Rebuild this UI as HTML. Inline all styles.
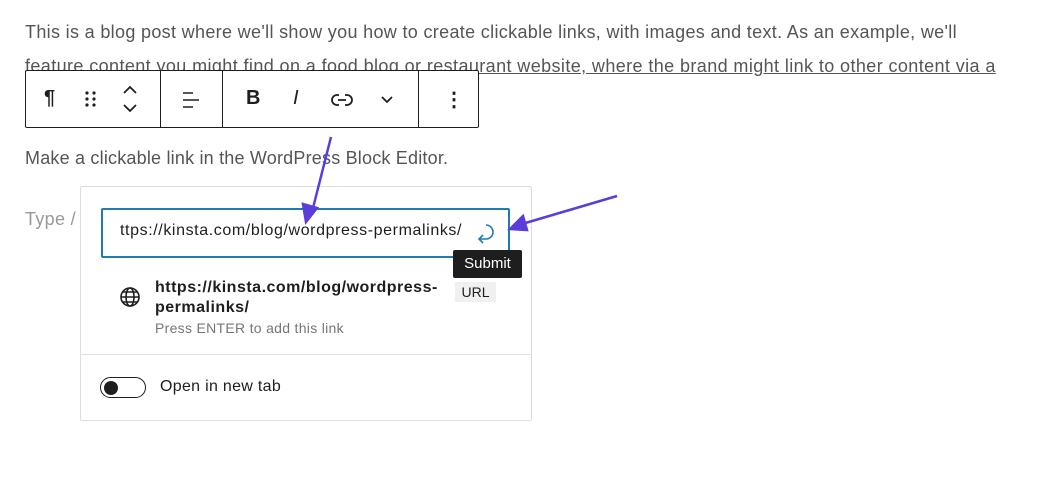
<!DOCTYPE html>
<html><head><style>
body{margin:0;width:1046px;height:485px;background:#fff;position:relative;overflow:hidden;font-family:"Liberation Sans",sans-serif}
.t{position:absolute;font-size:18px;color:#555;white-space:nowrap;letter-spacing:0.33px}
.tb{position:absolute;left:25px;top:70px;width:452px;height:56px;border:1px solid #1e1e1e;background:#fff;border-radius:2px}
.sep{position:absolute;top:0;height:56px;border-left:1px solid #1e1e1e}
.ic{position:absolute;top:16px;font-size:20px;color:#1e1e1e}
.pop{position:absolute;left:80px;top:186px;width:450px;height:233px;border:1px solid #ddd;background:#fff;border-radius:2px}
</style></head><body>
<div class="t" style="left:25px;top:22px">This is a blog post where we'll show you how to create clickable links, with images and text. As an example, we'll</div>
<div class="t" style="left:25px;top:56px;text-decoration:underline;letter-spacing:0.4px">feature content you might find on a food blog or restaurant website, where the brand might link to other content via a</div>
<div class="tb">
 <div class="ic" style="left:18px;font-weight:bold">¶</div>
 <svg style="position:absolute;left:58px;top:18px" width="14" height="20" fill="#1e1e1e"><circle cx="3" cy="4" r="1.6"/><circle cx="10" cy="4" r="1.6"/><circle cx="3" cy="10" r="1.6"/><circle cx="10" cy="10" r="1.6"/><circle cx="3" cy="16" r="1.6"/><circle cx="10" cy="16" r="1.6"/></svg>
 <svg style="position:absolute;left:95px;top:12px" width="18" height="32" fill="none" stroke="#1e1e1e" stroke-width="1.8"><path d="M3 10l6-6 6 6M3 22l6 6 6-6"/></svg>
 <div class="sep" style="left:134px"></div>
 <svg style="position:absolute;left:153px;top:17px" width="24" height="24"><path d="M4 5h10M4 12h16M4 19h10" stroke="#1e1e1e" stroke-width="1.6"/></svg>
 <div class="sep" style="left:196px"></div>
 <div class="ic" style="left:220px;font-weight:bold">B</div>
 <div class="ic" style="left:267px;font-style:italic">I</div>
 <svg style="position:absolute;left:305px;top:19px" width="22" height="20"><path d="M8 5H6a5 5 0 000 10h2M14 5h2a5 5 0 010 10h-2M7 10h8" stroke="#1e1e1e" stroke-width="1.8" fill="none"/></svg>
 <svg style="position:absolute;left:354px;top:22px" width="14" height="12"><path d="M2 4l5 5 5-5" stroke="#1e1e1e" stroke-width="1.8" fill="none"/></svg>
 <div class="sep" style="left:392px"></div>
 <div class="ic" style="left:418px;font-weight:bold">⋮</div>
</div>
<div class="t" style="left:25px;top:148px;letter-spacing:0.2px">Make a clickable link in the WordPress Block Editor.</div>
<div class="t" style="left:25px;top:209px;color:#999">Type /</div>
<div class="pop"></div>
<div style="position:absolute;left:101px;top:208px;width:405px;height:46px;border:2px solid #1f7bb0;border-radius:2px;background:#fff"></div>
<div style="position:absolute;left:120px;top:222px;font-size:16px;color:#1e1e1e;letter-spacing:0.6px">ttps://kinsta.com/blog/wordpress-permalinks/</div>
<svg style="position:absolute;left:474px;top:222px" width="26" height="26"><path d="M12 3a7 7 0 110 14H5M9 13l-4 4 4 4" stroke="#1f7bb0" stroke-width="1.6" fill="none"/></svg>
<div style="position:absolute;left:453px;top:250px;width:69px;height:28px;background:#1e1e1e;color:#fff;font-size:15px;line-height:28px;text-align:center;border-radius:2px">Submit</div>
<svg style="position:absolute;left:119px;top:286px" width="22" height="22" fill="none" stroke="#1e1e1e" stroke-width="1.6"><circle cx="11" cy="11" r="9"/><ellipse cx="11" cy="11" rx="4" ry="9"/><path d="M2 11h18M4 6h14M4 16h14"/></svg>
<div style="position:absolute;left:155px;top:278px;font-size:16px;font-weight:bold;color:#1e1e1e;line-height:20px;letter-spacing:0.5px">https://kinsta.com/blog/wordpress-<br>permalinks/</div>
<div style="position:absolute;left:455px;top:282px;width:41px;height:20px;background:#f0f0f0;font-size:14px;color:#1e1e1e;text-align:center;line-height:20px">URL</div>
<div style="position:absolute;left:155px;top:320px;font-size:14px;color:#757575;letter-spacing:0.3px">Press ENTER to add this link</div>
<div style="position:absolute;left:80px;top:354px;width:451px;border-top:1px solid #e0e0e0"></div>
<div style="position:absolute;left:100px;top:377px;width:44px;height:19px;border:1.5px solid #1e1e1e;border-radius:11px"></div>
<div style="position:absolute;left:104px;top:381px;width:14px;height:14px;background:#1e1e1e;border-radius:50%"></div>
<div style="position:absolute;left:160px;top:378px;font-size:16px;color:#1e1e1e;letter-spacing:0.3px">Open in new tab</div>
<svg style="position:absolute;left:0;top:0" width="1046" height="485"><g stroke="#5b3ddb" stroke-width="2.5" fill="#5b3ddb"><path d="M331 137L312 212"/><path d="M306 222l-3-18 14 4z"/><path d="M617 196L522 224"/><path d="M510 229l13-13 4 14z"/></g></svg>
</body></html>
